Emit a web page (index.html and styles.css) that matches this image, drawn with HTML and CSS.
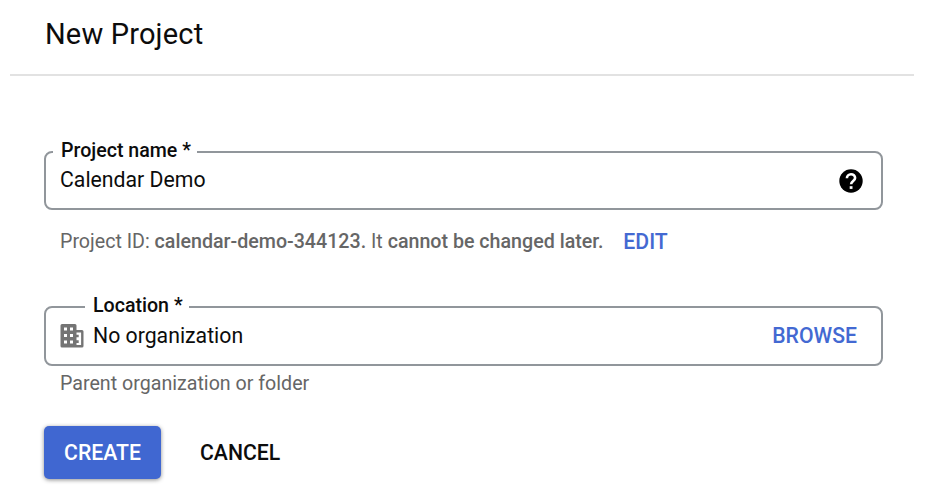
FILE: index.html
```html
<!DOCTYPE html>
<html lang="en">
<head>
<meta charset="utf-8">
<title>New Project</title>
<link rel="stylesheet" href="styles.css">
</head>
<body>
<header class="header"><h1 class="title">New Project</h1></header>
<main class="form">
  <fieldset class="field">
    <legend class="legend">Project name *</legend>
    <div class="row">
      <span class="value value-name">Calendar Demo</span>
      <svg class="help" viewBox="0 0 24 24"><circle cx="12" cy="12" r="11.700"/><path fill="none" stroke="#fff" stroke-width="2.600" d="M7.900 9.300c0-2.400 1.800-4.100 4.100-4.100s4.100 1.600 4.100 3.800c0 2.900-4 3-4 6.200"/><path fill="#fff" d="M10.700 17.200h2.800v2.700h-2.800z"/></svg>
    </div>
  </fieldset>
  <p class="note"><span>Project ID: <b>calendar-demo-344123.</b> It <b>cannot be changed later.</b></span><a class="edit">EDIT</a></p>
  <fieldset class="field location">
    <legend class="legend legend-loc">Location *</legend>
    <div class="row row-loc">
      <svg class="building" viewBox="0 0 24 24"><path fill="#747474" fill-rule="evenodd" d="M2 0h13q1.500 0 1.500 1.500V6H22q1.500 0 1.500 1.500V22q0 1.500-1.500 1.500H2Q.5 23.500.5 22V1.500Q.5 0 2 0zM4 3.500v3h3v-3zM10 3.500v3h3v-3zM4 10v3h3v-3zM10 10v3h3v-3zM4 16.500v3h3v-3zM10 16.500v3h3v-3zM16.500 8.500v2.200h2.200v2.600h-2.200v3h2.200v2.600h-2.200v2h4.600V8.500z"/></svg>
      <span class="value">No organization</span>
      <a class="browse">BROWSE</a>
    </div>
  </fieldset>
  <p class="hint">Parent organization or folder</p>
  <div class="actions">
    <button class="btn create">CREATE</button>
    <button class="btn cancel">CANCEL</button>
  </div>
</main>
</body>
</html>
```
FILE: styles.css
```css
* { box-sizing: border-box; }
body { margin: 0; width: 926px; height: 504px; background: #fff; color: #0c0c0c; font: 20px/24px Roboto, sans-serif; overflow: hidden; }
.header { height: 76px; margin: 0 12px 0 10px; padding: 16px 35px; border-bottom: 2px solid #e2e2e2; }
.title { margin: 0; font-size: 29px; line-height: 36px; font-weight: 400; letter-spacing: .17px; }
.form { padding: 64px 43px 0 44px; }
.field { display: block; min-width: 0; height: 70px; margin: 0; padding: 0 18px 0 14px; border: 2px solid #91969b; border-radius: 8px; }
.legend { height: 24px; padding: 0 6px 0 8px; margin-left: -7px; font-size: 19.6px; line-height: 21px; font-weight: 500; }
.legend-loc { margin-left: 25px; line-height: 22px; }
.row { display: flex; align-items: center; height: 33px; }
.row-loc { height: 34px; }
.value { flex: 1; font-size: 21.25px; }
.value-name { padding-bottom: 1px; }
.help { width: 24px; height: 24px; }
.note { display: flex; margin: 20px 0 0; padding-left: 16px; color: #666; font-size: 19.65px; }
.note b { font-weight: 500; }
.edit { margin-left: 20px; color: #4369d2; font-size: 21.2px; font-weight: 500; }
.location { height: 71px; margin-top: 41px; }
.building { width: 24px; height: 24px; margin: 0 9px 0 0; }
.browse { margin-right: 6px; color: #4369d2; font-size: 21.2px; font-weight: 500; }
.hint { margin: 6px 0 0; padding-left: 16px; color: #666; font-size: 19.65px; }
.actions { display: flex; gap: 19px; margin-top: 30px; }
.btn { height: 53px; padding: 0 20px; border: 0; border-radius: 5px; font: 500 21.2px Roboto, sans-serif; color: #0c0c0c; background: none; }
.create { width: 117px; color: #fff; background: #4067d1; box-shadow: 0 1px 4px rgba(0,0,0,.45); }
```
